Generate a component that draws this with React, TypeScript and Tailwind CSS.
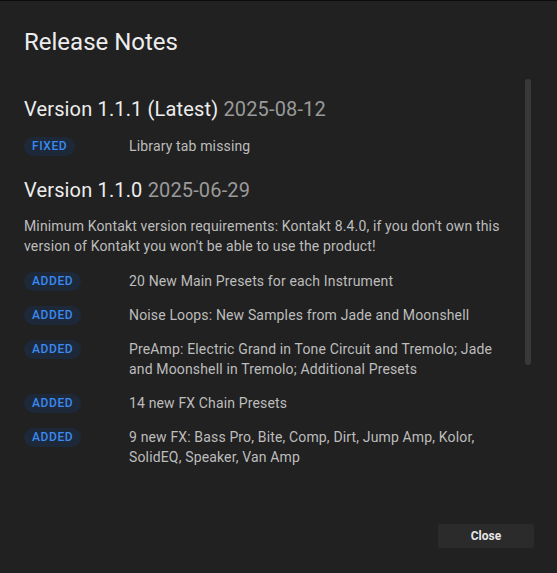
import React from "react";

type Item = { tag: "FIXED" | "ADDED"; text: string };

const Badge = ({ tag }: { tag: string }) => (
  <span className="inline-flex h-[19px] items-center rounded-full bg-[#1d2939] px-2 text-[12px] font-medium leading-none tracking-[0.6px] text-[#3a8af2]">
    {tag}
  </span>
);

const Row = ({ item }: { item: Item }) => (
  <div className="grid grid-cols-[105px_1fr] items-start">
    <div className="flex h-5 items-center">
      <Badge tag={item.tag} />
    </div>
    <div className="text-[14px] leading-[20px] tracking-[0.15px] text-[#bdbdbd]">{item.text}</div>
  </div>
);

const added: Item[] = [
  { tag: "ADDED", text: "20 New Main Presets for each Instrument" },
  { tag: "ADDED", text: "Noise Loops: New Samples from Jade and Moonshell" },
  {
    tag: "ADDED",
    text: "PreAmp: Electric Grand in Tone Circuit and Tremolo; Jade and Moonshell in Tremolo; Additional Presets",
  },
  { tag: "ADDED", text: "14 new FX Chain Presets" },
  {
    tag: "ADDED",
    text: "9 new FX: Bass Pro, Bite, Comp, Dirt, Jump Amp, Kolor, SolidEQ, Speaker, Van Amp",
  },
];

export default function App() {
  return (
    <div
      className="flex h-[573px] w-[557px] flex-col border-t border-[#0c0c0c] bg-[#212121]"
      style={{ fontFamily: "Roboto, 'Noto Sans', sans-serif" }}
    >
      <div className="px-6 pt-[25px]">
        <h1 className="text-[24px] font-normal leading-[32px] text-[#ededed]">Release Notes</h1>
      </div>
      <div className="mt-[21px] flex">
        <div className="flex-1 pl-6 pr-[20px] pt-4">
          <h2 className="text-[20px] leading-[28px] tracking-[0.15px] text-[#ededed]">
            Version 1.1.1 (Latest) <span className="text-[#9a9a9a]">2025-08-12</span>
          </h2>
          <div className="mt-[13px]">
            <Row item={{ tag: "FIXED", text: "Library tab missing" }} />
          </div>
          <h2 className="mt-5 text-[20px] leading-[28px] tracking-[0.15px] text-[#ededed]">
            Version 1.1.0 <span className="text-[#9a9a9a]">2025-06-29</span>
          </h2>
          <p className="mt-3 text-[14px] leading-[20px] tracking-[0.15px] text-[#bdbdbd]">
            Minimum Kontakt version requirements: Kontakt 8.4.0, if you don't own this version of Kontakt you won't be able to use the product!
          </p>
          <div className="mt-[15px] flex flex-col gap-[14px]">
            {added.map((it, i) => (
              <Row key={i} item={it} />
            ))}
          </div>
        </div>
        <div className="mr-[26px] h-[286px] w-[6px] rounded-full bg-[#393939]" />
      </div>
      <div className="mt-auto flex justify-end pb-[25px] pr-[23px]">
        <button className="h-6 w-24 rounded-[2px] bg-[#2b2b2b] text-[12px] font-bold text-[#e6e6e6]">
          Close
        </button>
      </div>
    </div>
  );
}
